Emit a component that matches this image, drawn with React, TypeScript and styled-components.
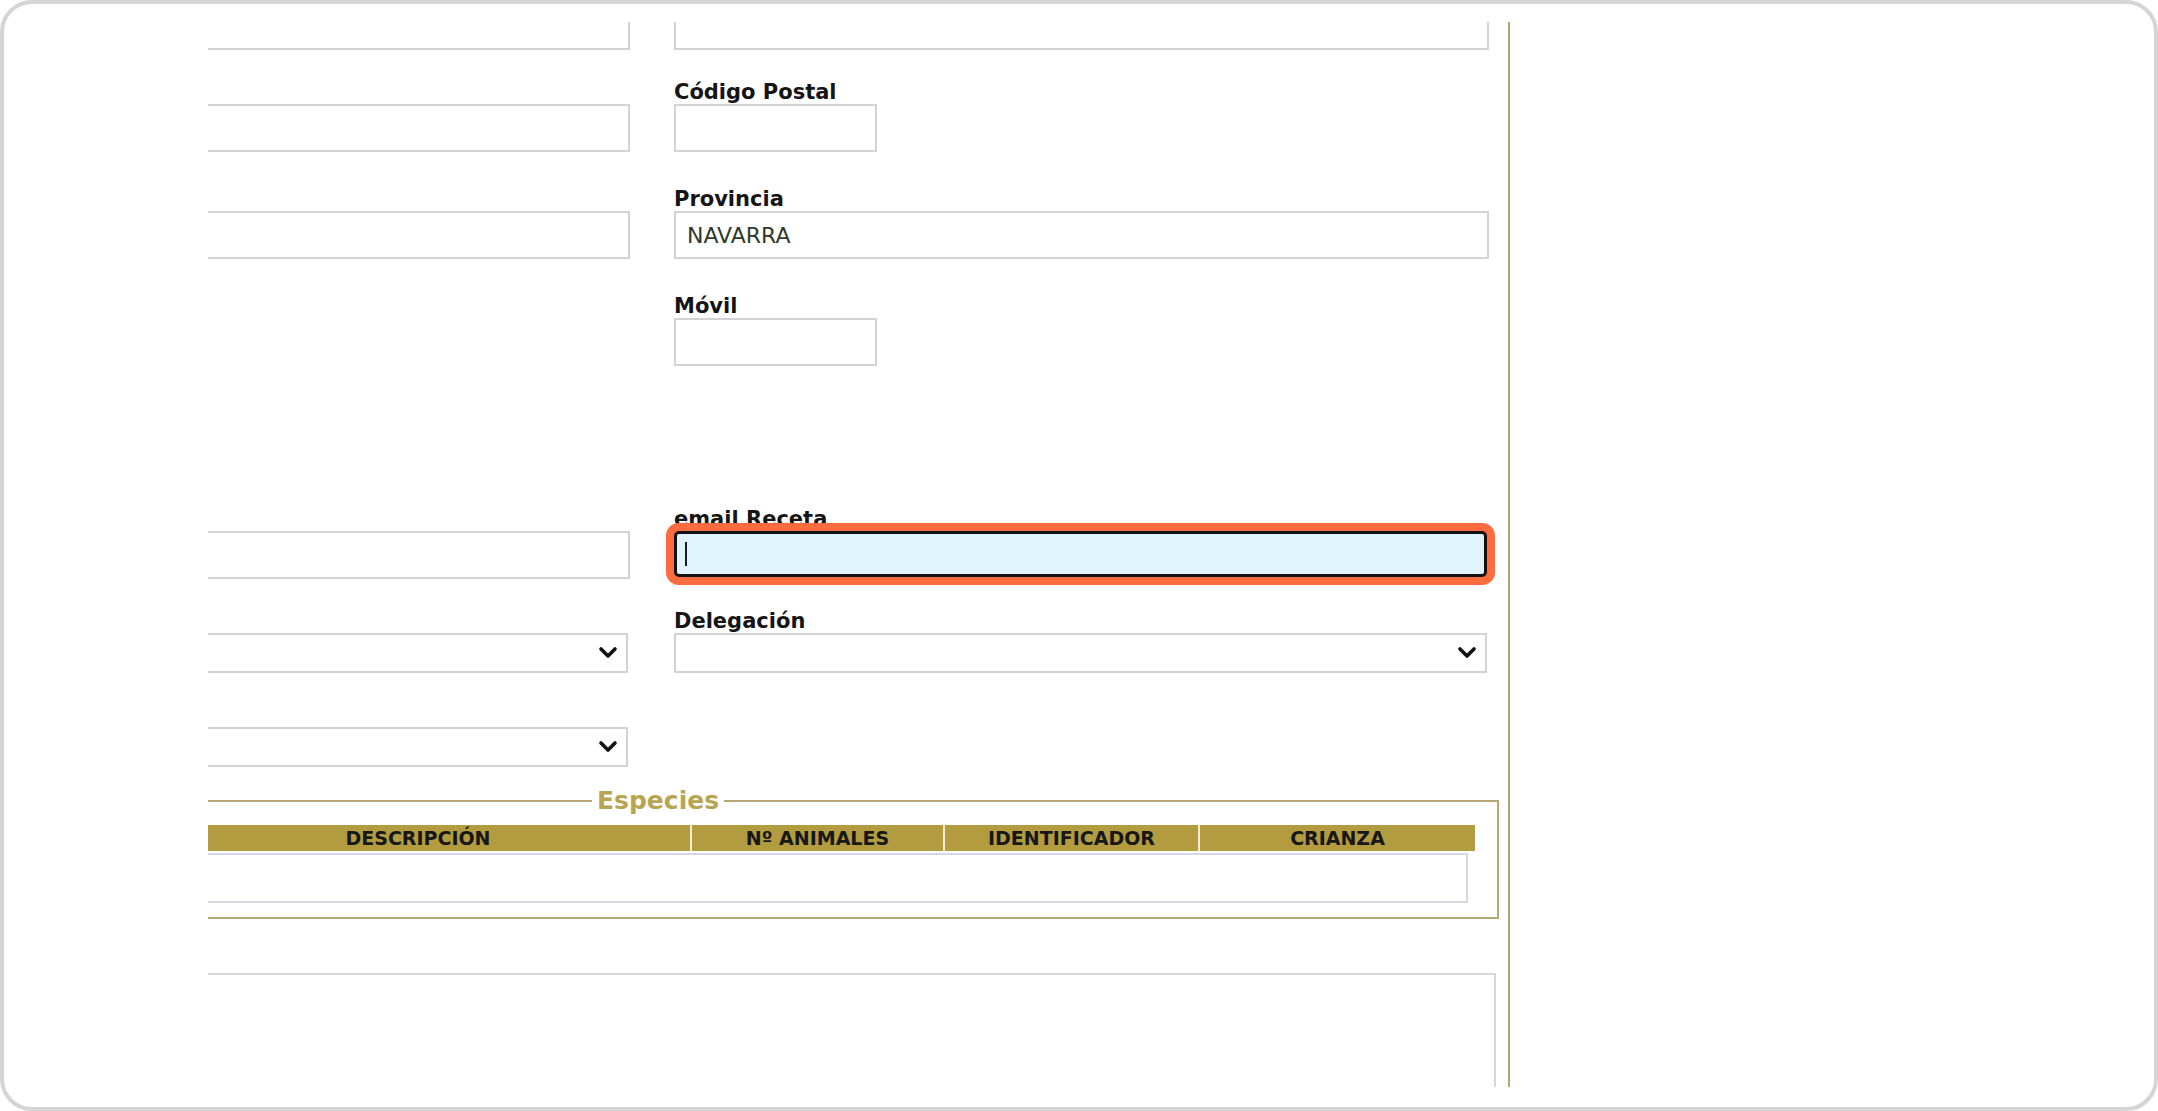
import * as React from "react";
import styled, { createGlobalStyle } from "styled-components";

const GlobalStyle = createGlobalStyle`
  html, body {
    margin: 0;
    padding: 0;
    background: #ffffff;
  }
  body {
    font-family: "DejaVu Sans", Verdana, sans-serif;
  }
  * {
    box-sizing: border-box;
  }
`;

const Frame = styled.div`
  height: 100vh;
  border: 4px solid #d5d5d7;
  border-radius: 32px;
  background: #ffffff;
  padding: 18px 24px 20px 204px;
  display: flex;
`;

const Viewport = styled.div`
  flex: 1;
  overflow: hidden;
`;

const Page = styled.div`
  display: flex;
  margin-left: -160px;
  margin-top: -44px;
  width: max-content;
`;

const Main = styled.div`
  width: 1462px;
  min-height: 1200px;
  padding: 0 9px 0 22px;
  border-right: 2px solid #b4a46e;
`;

const Sidebar = styled.div`
  width: 620px;
`;

const FormRow = styled.div<{ $gap: number }>`
  display: grid;
  grid-template-columns: 560px 1fr;
  column-gap: 44px;
  margin-right: 10px;
  margin-bottom: ${(p) => p.$gap}px;
`;

const Field = styled.div`
  display: flex;
  flex-direction: column;
  align-items: flex-start;
`;

const Label = styled.label`
  height: 24px;
  font-size: 21px;
  line-height: 24px;
  font-weight: bold;
  color: #151515;
  white-space: nowrap;
`;

const TextInput = styled.input<{ $width?: string }>`
  display: block;
  width: ${(p) => p.$width ?? "100%"};
  height: 48px;
  border: 2px solid #d3d3d3;
  background: #ffffff;
  padding: 0 11px;
  font-family: "DejaVu Sans", Verdana, sans-serif;
  font-size: 22px;
  color: #2f3a2a;
  outline: none;
`;

const FocusWrap = styled.div`
  position: relative;
  z-index: 1;
  width: calc(100% - 2px);
`;

const FocusedInput = styled(TextInput)`
  height: 46px;
  border: 3px solid #121212;
  border-radius: 5px;
  background: #dff4fb;
  box-shadow: 0 0 0 8px #fc6c3f;
`;

const Caret = styled.span`
  position: absolute;
  left: 11px;
  top: 11px;
  width: 2px;
  height: 24px;
  background: #1e1e1e;
`;

const SelectWrap = styled.div`
  position: relative;
  width: calc(100% - 2px);
`;

const Select = styled.select`
  display: block;
  width: 100%;
  height: 40px;
  border: 2px solid #d3d3d3;
  border-radius: 0;
  background: #ffffff;
  appearance: none;
  font-family: "DejaVu Sans", Verdana, sans-serif;
  font-size: 18px;
  outline: none;
`;

const Chevron = styled.svg`
  position: absolute;
  right: 10px;
  top: 13px;
  pointer-events: none;
`;

const Fieldset = styled.fieldset`
  margin: 20px 0 0;
  padding: 10px 22px 14px 10px;
  border: 2px solid #b6a874;
  min-width: 0;
`;

const Legend = styled.legend`
  margin-left: 510px;
  padding: 0 5px;
  font-size: 25px;
  line-height: 28px;
  font-weight: bold;
  color: #b8a552;
`;

const HeadRow = styled.div`
  display: grid;
  grid-template-columns: 62px 544px 251px 253px 1fr;
  gap: 2px;
  background: #f4edd2;
  height: 26px;
`;

const HeadCell = styled.div`
  background: #b39c40;
  font-size: 19px;
  line-height: 26px;
  font-weight: bold;
  color: #171717;
  text-align: center;
  white-space: nowrap;
`;

const BodyBox = styled.div`
  margin: 2px 7px 0 0;
  height: 50px;
  border: 2px solid #d8d6e3;
  background: #ffffff;
`;

const Notes = styled.textarea`
  display: block;
  margin-top: 54px;
  width: calc(100% - 3px);
  height: 220px;
  border: 2px solid #d6d6d6;
  resize: none;
  outline: none;
`;

const SelectField: React.FC<{ label?: string }> = ({ label }) => (
  <Field>
    <Label>{label}</Label>
    <SelectWrap>
      <Select defaultValue="">
        <option value=""></option>
      </Select>
      <Chevron width="20" height="13" viewBox="0 0 20 13">
        <polyline
          points="3,3 10,10 17,3"
          fill="none"
          stroke="#111111"
          strokeWidth="3.6"
          strokeLinecap="round"
          strokeLinejoin="round"
        />
      </Chevron>
    </SelectWrap>
  </Field>
);

const App: React.FC = () => {
  return (
    <>
      <GlobalStyle />
      <Frame>
        <Viewport>
          <Page>
            <Main>
              <FormRow $gap={30}>
                <Field>
                  <Label />
                  <TextInput />
                </Field>
                <Field>
                  <Label />
                  <TextInput />
                </Field>
              </FormRow>

              <FormRow $gap={35}>
                <Field>
                  <Label />
                  <TextInput />
                </Field>
                <Field>
                  <Label>Código Postal</Label>
                  <TextInput $width="203px" />
                </Field>
              </FormRow>

              <FormRow $gap={35}>
                <Field>
                  <Label />
                  <TextInput />
                </Field>
                <Field>
                  <Label>Provincia</Label>
                  <TextInput defaultValue="NAVARRA" />
                </Field>
              </FormRow>

              <FormRow $gap={141}>
                <Field />
                <Field>
                  <Label>Móvil</Label>
                  <TextInput $width="203px" />
                </Field>
              </FormRow>

              <FormRow $gap={30}>
                <Field>
                  <Label />
                  <TextInput />
                </Field>
                <Field>
                  <Label>email Receta</Label>
                  <FocusWrap>
                    <FocusedInput />
                    <Caret />
                  </FocusWrap>
                </Field>
              </FormRow>

              <FormRow $gap={30}>
                <SelectField />
                <SelectField label="Delegación" />
              </FormRow>

              <FormRow $gap={0}>
                <SelectField />
                <Field />
              </FormRow>

              <Fieldset>
                <Legend>Especies</Legend>
                <HeadRow>
                  <HeadCell />
                  <HeadCell>DESCRIPCIÓN</HeadCell>
                  <HeadCell>Nº ANIMALES</HeadCell>
                  <HeadCell>IDENTIFICADOR</HeadCell>
                  <HeadCell>CRIANZA</HeadCell>
                </HeadRow>
                <BodyBox />
              </Fieldset>

              <Notes />
            </Main>
            <Sidebar />
          </Page>
        </Viewport>
      </Frame>
    </>
  );
};

export default App;
